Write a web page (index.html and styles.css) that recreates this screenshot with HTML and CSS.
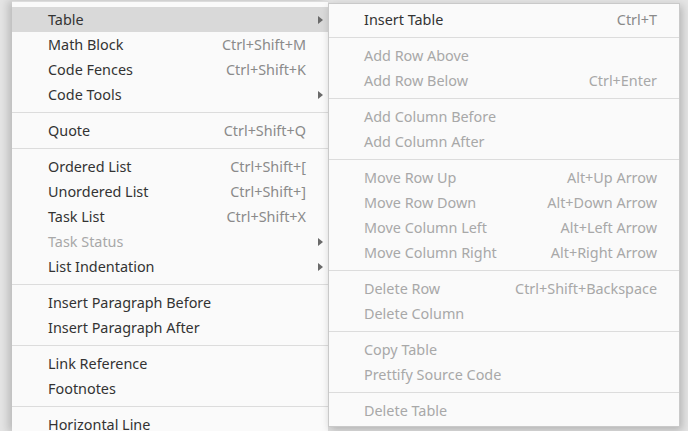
FILE: index.html
```html
<!DOCTYPE html>
<html>
<head>
<meta charset="utf-8">
<link rel="stylesheet" href="styles.css">
</head>
<body>
<div class="menu main">
  <div class="sep top"></div>
  <div class="item active"><span class="label">Table</span><span class="key"></span><span class="arrow"></span></div>
  <div class="item"><span class="label">Math Block</span><span class="key">Ctrl+Shift+M</span></div>
  <div class="item"><span class="label">Code Fences</span><span class="key">Ctrl+Shift+K</span></div>
  <div class="item"><span class="label">Code Tools</span><span class="key"></span><span class="arrow"></span></div>
  <div class="sep"></div>
  <div class="item"><span class="label">Quote</span><span class="key">Ctrl+Shift+Q</span></div>
  <div class="sep"></div>
  <div class="item"><span class="label">Ordered List</span><span class="key">Ctrl+Shift+[</span></div>
  <div class="item"><span class="label">Unordered List</span><span class="key">Ctrl+Shift+]</span></div>
  <div class="item"><span class="label">Task List</span><span class="key">Ctrl+Shift+X</span></div>
  <div class="item disabled"><span class="label">Task Status</span><span class="key"></span><span class="arrow"></span></div>
  <div class="item"><span class="label">List Indentation</span><span class="key"></span><span class="arrow"></span></div>
  <div class="sep"></div>
  <div class="item"><span class="label">Insert Paragraph Before</span><span class="key"></span></div>
  <div class="item"><span class="label">Insert Paragraph After</span><span class="key"></span></div>
  <div class="sep"></div>
  <div class="item"><span class="label">Link Reference</span><span class="key"></span></div>
  <div class="item"><span class="label">Footnotes</span><span class="key"></span></div>
  <div class="sep"></div>
  <div class="item"><span class="label">Horizontal Line</span><span class="key"></span></div>
</div>
<div class="menu sub">
  <div class="item"><span class="label">Insert Table</span><span class="key">Ctrl+T</span></div>
  <div class="sep"></div>
  <div class="item disabled"><span class="label">Add Row Above</span><span class="key"></span></div>
  <div class="item disabled"><span class="label">Add Row Below</span><span class="key">Ctrl+Enter</span></div>
  <div class="sep"></div>
  <div class="item disabled"><span class="label">Add Column Before</span><span class="key"></span></div>
  <div class="item disabled"><span class="label">Add Column After</span><span class="key"></span></div>
  <div class="sep"></div>
  <div class="item disabled"><span class="label">Move Row Up</span><span class="key">Alt+Up Arrow</span></div>
  <div class="item disabled"><span class="label">Move Row Down</span><span class="key">Alt+Down Arrow</span></div>
  <div class="item disabled"><span class="label">Move Column Left</span><span class="key">Alt+Left Arrow</span></div>
  <div class="item disabled"><span class="label">Move Column Right</span><span class="key">Alt+Right Arrow</span></div>
  <div class="sep"></div>
  <div class="item disabled"><span class="label">Delete Row</span><span class="key">Ctrl+Shift+Backspace</span></div>
  <div class="item disabled"><span class="label">Delete Column</span><span class="key"></span></div>
  <div class="sep"></div>
  <div class="item disabled"><span class="label">Copy Table</span><span class="key"></span></div>
  <div class="item disabled"><span class="label">Prettify Source Code</span><span class="key"></span></div>
  <div class="sep"></div>
  <div class="item disabled"><span class="label">Delete Table</span><span class="key"></span></div>
</div>
</body>
</html>
```
FILE: styles.css
```css
html, body {
  margin: 0;
  padding: 0;
  width: 688px;
  height: 431px;
  overflow: hidden;
  background: #e4e4e4;
  font-family: "Noto Sans", sans-serif;
  font-size: 14.4px;
}
body {
  position: relative;
}
.menu {
  background: #fafafa;
  box-sizing: border-box;
}
.main {
  margin-left: 12px;
  width: 316px;
  height: 431px;
  box-shadow: -4px 0 8px rgba(0,0,0,0.18);
}
.sub {
  position: absolute;
  left: 328px;
  top: 3px;
  width: 352px;
  height: 424px;
  border: 1px solid #c9c9c9;
  padding-top: 3px;
  box-shadow: 2px 3px 8px rgba(0,0,0,0.22);
}
.item {
  display: grid;
  grid-template-columns: 1fr auto 22px;
  align-items: center;
  height: 25px;
  padding-left: 36px;
  color: #333333;
  white-space: nowrap;
}
.sub .item {
  padding-left: 35px;
}
.item.active {
  background: #d9d9d9;
}
.key {
  color: #8a8a8a;
}
.item.disabled, .item.disabled .key {
  color: #a8a8a8;
}
.arrow {
  justify-self: end;
  margin-right: 5px;
  width: 0;
  height: 0;
  border-top: 4px solid transparent;
  border-bottom: 4px solid transparent;
  border-left: 5px solid #6a6a6a;
}
.sep {
  height: 1px;
  background: #dcdcdc;
  margin: 5px 0;
}
.sep.top {
  margin: 1px 0 5px;
}
```
